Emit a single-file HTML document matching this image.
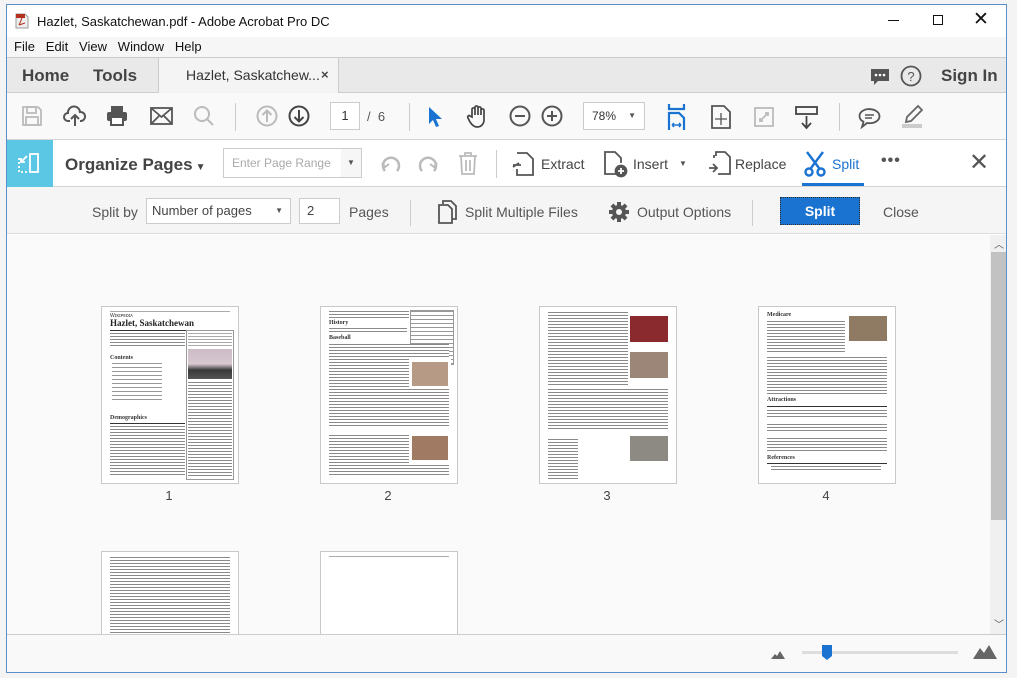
<!DOCTYPE html>
<html><head><meta charset="utf-8"><style>
*{margin:0;padding:0;box-sizing:border-box}
body{width:1017px;height:678px;background:#f4f4f4;font-family:"Liberation Sans",sans-serif;position:relative;overflow:hidden;color:#333}
.abs{position:absolute}
#win{position:absolute;left:6px;top:4px;width:1001px;height:669px;border:1px solid #5a8fc8;background:#fff;overflow:hidden}
.t{position:absolute;white-space:nowrap}
.tx{position:absolute;background:repeating-linear-gradient(#8a8a8a 0 1px,#fff 1px 3px)}
.tl{position:absolute;background:repeating-linear-gradient(#aaa 0 1px,#fff 1px 3px)}
.pg{position:absolute;background:#fff;border:1px solid #c8c8c8;overflow:hidden}
.num{position:absolute;font-size:13px;color:#444;width:40px;text-align:center}
svg{position:absolute}
</style></head><body>
<div id="win">
<svg style="left:7px;top:8px" width="16" height="16" viewBox="0 0 16 16"><path d="M2 1h9l3 3v11H2z" fill="#eee" stroke="#999"/><rect x="2" y="1" width="9" height="4" fill="#b3301c"/><path d="M5 12c2-4 3-6 3-8M5 12l6-2" stroke="#b3301c" fill="none"/></svg>
<div class="t" style="left:30px;top:9px;font-size:13px;color:#111">Hazlet, Saskatchewan.pdf - Adobe Acrobat Pro DC</div>
<div class="abs" style="left:881px;top:15px;width:11px;height:1px;background:#111"></div>
<div class="abs" style="left:926px;top:10px;width:10px;height:10px;border:1px solid #111"></div>
<div class="t" style="left:966px;top:3px;font-size:19px;color:#111">✕</div>
<div class="abs" style="left:0;top:32px;width:1001px;height:20px;background:#f6f6f6"></div>
<div class="t" style="left:7px;top:34px;font-size:13px;color:#111">File&nbsp;&nbsp;&nbsp;Edit&nbsp;&nbsp;&nbsp;View&nbsp;&nbsp;&nbsp;Window&nbsp;&nbsp;&nbsp;Help</div>
<div class="abs" style="left:0;top:52px;width:1001px;height:36px;background:#e9e9e9;border-top:1px solid #ccc;border-bottom:1px solid #ccc"></div>
<div class="abs" style="left:151px;top:52px;width:181px;height:37px;background:#f4f4f4;border-left:1px solid #ccc;border-right:1px solid #ccc;border-top:1px solid #ccc"></div>
<div class="t" style="left:15px;top:61px;font-size:17px;font-weight:bold;color:#444">Home</div>
<div class="t" style="left:86px;top:61px;font-size:17px;font-weight:bold;color:#444">Tools</div>
<div class="t" style="left:179px;top:62px;font-size:14px;color:#333">Hazlet, Saskatchew...</div>
<div class="t" style="left:314px;top:62px;font-size:13px;color:#444;font-weight:bold">×</div>
<svg style="left:863px;top:62px" width="20" height="20" viewBox="0 0 20 20"><path d="M1 2h18v12H8l-4 4v-4H1z" fill="#555"/><circle cx="6" cy="8" r="1.3" fill="#fff"/><circle cx="10" cy="8" r="1.3" fill="#fff"/><circle cx="14" cy="8" r="1.3" fill="#fff"/></svg>
<svg style="left:893px;top:60px" width="22" height="22" viewBox="0 0 22 22"><circle cx="11" cy="11" r="9.5" fill="none" stroke="#555" stroke-width="1.8"/><text x="11" y="16" font-size="13" text-anchor="middle" fill="#555" font-family="Liberation Sans">?</text></svg>
<div class="t" style="left:934px;top:61px;font-size:17px;font-weight:bold;color:#444">Sign In</div>
<div class="abs" style="left:0;top:88px;width:1001px;height:47px;background:#f9f9f9;border-bottom:1px solid #d4d4d4"></div>
<svg style="left:14px;top:100px" width="22" height="22" viewBox="0 0 22 22" fill="none" stroke="#bbb" stroke-width="1.8"><path d="M2 2h15l3 3v15H2z"/><rect x="6" y="2" width="9" height="6"/><rect x="5" y="12" width="12" height="8"/></svg>
<svg style="left:56px;top:100px" width="24" height="22" viewBox="0 0 24 22" fill="none" stroke="#555" stroke-width="2"><path d="M7 16H5a4 4 0 0 1 0-8 6 6 0 0 1 12-1 4.5 4.5 0 0 1 1 9h-1"/><path d="M12 21V10M8 14l4-4 4 4"/></svg>
<svg style="left:99px;top:100px" width="22" height="22" viewBox="0 0 22 22"><rect x="5" y="1" width="12" height="6" fill="#555"/><rect x="1" y="7" width="20" height="9" rx="2" fill="#555"/><rect x="5" y="12" width="12" height="8" fill="#fff" stroke="#555" stroke-width="2"/></svg>
<svg style="left:143px;top:102px" width="23" height="18" viewBox="0 0 23 18" fill="none" stroke="#555" stroke-width="1.8"><rect x="1" y="1" width="21" height="16"/><path d="M1 1l10.5 9L22 1M1 17l8-8M22 17l-8-8"/></svg>
<svg style="left:186px;top:100px" width="22" height="22" viewBox="0 0 22 22" fill="none" stroke="#bbb" stroke-width="2"><circle cx="9" cy="9" r="7"/><path d="M14 14l6 6"/></svg>
<div class="abs" style="left:228px;top:98px;width:1px;height:28px;background:#ccc"></div>
<svg style="left:249px;top:100px" width="22" height="22" viewBox="0 0 22 22" fill="none" stroke="#bbb" stroke-width="2"><circle cx="11" cy="11" r="9.5"/><path d="M11 17V6M6.5 10l4.5-4.5 4.5 4.5"/></svg>
<svg style="left:281px;top:100px" width="22" height="22" viewBox="0 0 22 22" fill="none" stroke="#444" stroke-width="2"><circle cx="11" cy="11" r="9.5"/><path d="M11 5v11M6.5 12l4.5 4.5 4.5-4.5"/></svg>
<div class="abs" style="left:323px;top:97px;width:30px;height:28px;border:1px solid #ccc;background:#fff;font-size:13px;text-align:center;line-height:26px">1</div>
<div class="t" style="left:360px;top:104px;font-size:13px;color:#555">/ &nbsp;6</div>
<div class="abs" style="left:402px;top:98px;width:1px;height:28px;background:#ccc"></div>
<svg style="left:420px;top:101px" width="16" height="22" viewBox="0 0 16 22"><path d="M2 1v17l4-4 3 7 3-1-3-7h6z" fill="#1a73d0"/></svg>
<svg style="left:459px;top:99px" width="24" height="25" viewBox="0 0 24 25" fill="none" stroke="#444" stroke-width="1.7"><path d="M6 13V5a1.6 1.6 0 0 1 3 0v6V3a1.6 1.6 0 0 1 3 0v8V4a1.6 1.6 0 0 1 3 0v7V6a1.6 1.6 0 0 1 3 0v10c0 4-3 7-7 7-3 0-5-2-7-5l-2-4c-1-2 1-3 2-2z"/></svg>
<svg style="left:502px;top:100px" width="22" height="22" viewBox="0 0 22 22" fill="none" stroke="#555" stroke-width="2"><circle cx="11" cy="11" r="9.5"/><path d="M6 11h10"/></svg>
<svg style="left:534px;top:100px" width="22" height="22" viewBox="0 0 22 22" fill="none" stroke="#555" stroke-width="2"><circle cx="11" cy="11" r="9.5"/><path d="M6 11h10M11 6v10"/></svg>
<div class="abs" style="left:576px;top:97px;width:62px;height:28px;border:1px solid #ccc;background:#fff;font-size:12px;line-height:26px;padding-left:8px;color:#333">78%<span style="position:absolute;right:8px;top:0;font-size:8px;color:#555">▼</span></div>
<svg style="left:660px;top:98px" width="20" height="28" viewBox="0 0 20 28" fill="none" stroke="#1a73d0" stroke-width="2.2"><path d="M2 1v5h15V1M2 27V10h10l5 5v12"/><path d="M5 22h9M5 22l2-2M5 22l2 2M14 22l-2-2M14 22l-2 2" stroke-width="1.5"/></svg>
<svg style="left:704px;top:100px" width="20" height="24" viewBox="0 0 20 24" fill="none" stroke="#555" stroke-width="1.8"><path d="M1 1h12l6 6v16H1z"/><path d="M10 8v12M4 14h12" stroke-width="1.3"/></svg>
<svg style="left:747px;top:102px" width="20" height="20" viewBox="0 0 20 20" fill="none" stroke="#bbb" stroke-width="1.8"><rect x="1" y="1" width="18" height="18"/><path d="M6 14l8-8M11 6h3v3M6 11v3h3"/></svg>
<svg style="left:788px;top:101px" width="24" height="24" viewBox="0 0 24 24" fill="none" stroke="#444" stroke-width="1.8"><rect x="1" y="1" width="21" height="7"/><path d="M11.5 10v12M7 17l4.5 5 4.5-5"/></svg>
<div class="abs" style="left:832px;top:98px;width:1px;height:28px;background:#ccc"></div>
<svg style="left:851px;top:102px" width="23" height="22" viewBox="0 0 23 22" fill="none" stroke="#555" stroke-width="1.8"><path d="M11.5 2C6 2 1.5 5 1.5 9c0 2.5 1.5 4.5 4 5.7L4 20l5-4c1 .2 1.5.2 2.5.2 5.5 0 10-3 10-7s-4.5-7-10-7z"/><path d="M7 8h9M7 11h7" stroke-width="1.4"/></svg>
<svg style="left:893px;top:99px" width="24" height="26" viewBox="0 0 24 26"><path d="M18 2l4 4-11 11-5 1 1-5z" fill="none" stroke="#666" stroke-width="1.8"/><rect x="2" y="20" width="20" height="4" fill="#ccc"/></svg>
<div class="abs" style="left:0;top:135px;width:1001px;height:47px;background:#fff;border-bottom:1px solid #d4d4d4"></div>
<div class="abs" style="left:0;top:135px;width:46px;height:47px;background:#5bc7e5"></div>
<svg style="left:11px;top:148px" width="22" height="20" viewBox="0 0 22 20" fill="none" stroke="#fff" stroke-width="1.8"><rect x="12" y="1" width="8" height="18"/><path d="M1 5v14h8" stroke-dasharray="2 2"/><path d="M9 3L3 9M3 5v4h4"/></svg>
<div class="t" style="left:58px;top:150px;font-size:17px;font-weight:bold;color:#444">Organize Pages<span style="font-size:10px;margin-left:3px">▼</span></div>
<div class="abs" style="left:216px;top:143px;width:139px;height:30px;border:1px solid #ccc;background:#fff;font-size:12px;line-height:28px;padding-left:8px;color:#aaa">Enter Page Range<span style="position:absolute;right:0;top:0;width:20px;height:28px;background:#f6f6f6;text-align:center;font-size:8px;color:#555">▼</span></div>
<svg style="left:373px;top:148px" width="22" height="22" viewBox="0 0 22 22" fill="none" stroke="#bbb" stroke-width="2.5"><path d="M5 18A8 8 0 1 1 17 18"/><path d="M2 10l3 4 4-3" stroke-width="2"/></svg>
<svg style="left:410px;top:148px" width="22" height="22" viewBox="0 0 22 22" fill="none" stroke="#bbb" stroke-width="2.5"><path d="M5 18A8 8 0 1 1 17 18"/><path d="M20 10l-3 4-4-3" stroke-width="2"/></svg>
<svg style="left:451px;top:147px" width="20" height="23" viewBox="0 0 20 23" fill="none" stroke="#bbb" stroke-width="1.8"><path d="M1 4h18M7 4V1h6v3M3 4l1 18h12l1-18M8 8v11M12 8v11"/></svg>
<div class="abs" style="left:489px;top:145px;width:1px;height:28px;background:#ccc"></div>
<svg style="left:505px;top:147px" width="22" height="24" viewBox="0 0 22 24" fill="none" stroke="#555" stroke-width="1.8"><path d="M5 1h10l6 6v16H5v-6"/><path d="M1 15l6-4M9 13H1" /></svg>
<div class="t" style="left:534px;top:151px;font-size:14px;color:#444">Extract</div>
<svg style="left:597px;top:146px" width="24" height="27" viewBox="0 0 24 27" fill="none" stroke="#555" stroke-width="1.8"><path d="M12 23H1V1h10l6 6v5"/><circle cx="17" cy="20" r="5.5" fill="#555"/><path d="M17 17v6M14 20h6" stroke="#fff"/></svg>
<div class="t" style="left:626px;top:151px;font-size:14px;color:#444">Insert</div>
<div class="t" style="left:672px;top:154px;font-size:8px;color:#555">▼</div>
<svg style="left:700px;top:145px" width="24" height="27" viewBox="0 0 24 27" fill="none" stroke="#555" stroke-width="1.8"><path d="M9 6V2h9l5 5v17H11"/><path d="M2 18h7M6 14l4 4-4 4M7 8V5"/></svg>
<div class="t" style="left:728px;top:151px;font-size:14px;color:#444">Replace</div>
<svg style="left:797px;top:146px" width="22" height="26" viewBox="0 0 22 26" fill="none" stroke="#1a73d0" stroke-width="2.4"><path d="M3 1l12 16M19 1L7 17"/><circle cx="5" cy="21" r="3.5"/><circle cx="17" cy="21" r="3.5"/></svg>
<div class="t" style="left:825px;top:151px;font-size:14px;color:#1a73d0">Split</div>
<div class="abs" style="left:795px;top:178px;width:62px;height:3px;background:#1a73d0"></div>
<div class="t" style="left:874px;top:147px;font-size:16px;color:#555;letter-spacing:1px;font-weight:bold">•••</div>
<div class="t" style="left:962px;top:143px;font-size:24px;color:#555">✕</div>
<div class="abs" style="left:0;top:182px;width:1001px;height:47px;background:#f5f5f5;border-bottom:1px solid #ddd"></div>
<div class="t" style="left:85px;top:199px;font-size:14px;color:#555">Split by</div>
<div class="abs" style="left:139px;top:193px;width:145px;height:26px;border:1px solid #ccc;background:#fff;font-size:13px;line-height:24px;padding-left:5px;color:#444">Number of pages<span style="position:absolute;right:7px;top:0;font-size:8px;color:#555">▼</span></div>
<div class="abs" style="left:292px;top:193px;width:41px;height:26px;border:1px solid #ccc;background:#fff;font-size:13px;line-height:24px;padding-left:7px;color:#444">2</div>
<div class="t" style="left:342px;top:199px;font-size:14px;color:#555">Pages</div>
<div class="abs" style="left:403px;top:195px;width:1px;height:26px;background:#ccc"></div>
<svg style="left:431px;top:195px" width="20" height="24" viewBox="0 0 20 24" fill="none" stroke="#555" stroke-width="1.8"><path d="M5 4V1h8l5 5v13h-4"/><path d="M1 5h9l4 4v14H1z"/></svg>
<div class="t" style="left:458px;top:199px;font-size:14px;color:#555">Split Multiple Files</div>
<svg style="left:601px;top:196px" width="22" height="22" viewBox="0 0 22 22"><g fill="#555"><circle cx="11" cy="11" r="7"/><rect x="9" y="1" width="4" height="20"/><rect x="1" y="9" width="20" height="4"/><rect x="9" y="1" width="4" height="20" transform="rotate(45 11 11)"/><rect x="9" y="1" width="4" height="20" transform="rotate(-45 11 11)"/></g><circle cx="11" cy="11" r="3" fill="#f5f5f5"/></svg>
<div class="t" style="left:630px;top:199px;font-size:14px;color:#555">Output Options</div>
<div class="abs" style="left:745px;top:195px;width:1px;height:26px;background:#ccc"></div>
<div class="abs" style="left:773px;top:192px;width:80px;height:28px;background:#1a73d0;border:1px dotted #333;color:#fff;font-size:14px;font-weight:bold;text-align:center;line-height:26px">Split</div>
<div class="t" style="left:876px;top:199px;font-size:14px;color:#555">Close</div>
<div class="abs" style="left:0;top:230px;width:983px;height:399px;background:#fafafa"></div>
<div class="abs" style="left:983px;top:230px;width:17px;height:399px;background:#f0f0f0"></div>
<div class="abs" style="left:984px;top:247px;width:15px;height:268px;background:#c2c2c2"></div>
<div class="t" style="left:987px;top:231px;font-size:10px;color:#555">︿</div>
<div class="t" style="left:987px;top:611px;font-size:10px;color:#555">﹀</div>
<div class="pg" style="left:94px;top:301px;width:138px;height:178px">
 <div class="tl" style="left:8px;top:4px;width:120px;height:1px"></div>
 <div class="t" style="left:8px;top:6px;font-size:5px;color:#333">Wɪᴋɪᴘᴇᴅɪᴀ</div>
 <div class="t" style="left:8px;top:11px;font-size:9px;font-family:'Liberation Serif';font-weight:bold;color:#222">Hazlet, Saskatchewan</div>
 <div class="abs" style="left:8px;top:23px;width:122px;height:1px;background:#333"></div>
 <div class="tx" style="left:8px;top:26px;width:75px;height:14px"></div>
 <div class="t" style="left:8px;top:48px;font-size:6px;font-family:'Liberation Serif';font-weight:bold">Contents</div>
 <div class="tx" style="left:10px;top:56px;width:50px;height:40px;background:repeating-linear-gradient(#999 0 1px,#fff 1px 4px)"></div>
 <div class="t" style="left:8px;top:108px;font-size:6px;font-family:'Liberation Serif';font-weight:bold">Demographics</div>
 <div class="abs" style="left:8px;top:116px;width:75px;height:1px;background:#333"></div>
 <div class="tx" style="left:8px;top:119px;width:75px;height:50px"></div>
 <div class="abs" style="left:84px;top:23px;width:48px;height:150px;border:1px solid #999"></div>
 <div class="tl" style="left:86px;top:26px;width:44px;height:13px"></div>
 <div class="abs" style="left:86px;top:42px;width:44px;height:30px;background:linear-gradient(#cbbcc6 0,#d8c8cf 50%,#3a3a3a 70%,#555 100%)"></div>
 <div class="tx" style="left:86px;top:75px;width:44px;height:96px"></div>
</div>
<div class="num" style="left:142px;top:483px">1</div>
<div class="pg" style="left:313px;top:301px;width:138px;height:178px">
 <div class="tx" style="left:8px;top:4px;width:80px;height:8px"></div>
 <div class="abs" style="left:89px;top:3px;width:44px;height:55px;border:1px solid #999;background:repeating-linear-gradient(#999 0 1px,#fff 1px 4px)"></div>
 <div class="t" style="left:8px;top:13px;font-size:6px;font-family:'Liberation Serif';font-weight:bold">History</div>
 <div class="tx" style="left:8px;top:21px;width:78px;height:6px"></div>
 <div class="t" style="left:8px;top:28px;font-size:6px;font-family:'Liberation Serif';font-weight:bold">Baseball</div>
 <div class="tx" style="left:8px;top:37px;width:120px;height:84px"></div>
 <div class="abs" style="left:88px;top:52px;width:42px;height:30px;background:#b79a86;border:3px solid #fff"></div>
 <div class="tx" style="left:8px;top:128px;width:120px;height:40px"></div>
 <div class="abs" style="left:88px;top:126px;width:42px;height:30px;background:#a07a63;border:3px solid #fff"></div>
</div>
<div class="num" style="left:361px;top:483px">2</div>
<div class="pg" style="left:532px;top:301px;width:138px;height:178px">
 <div class="tx" style="left:8px;top:5px;width:80px;height:75px"></div>
 <div class="abs" style="left:90px;top:9px;width:38px;height:26px;background:#8a2a2e"></div>
 <div class="abs" style="left:90px;top:45px;width:38px;height:26px;background:#9b8677"></div>
 <div class="tx" style="left:8px;top:82px;width:120px;height:42px"></div>
 <div class="tx" style="left:8px;top:132px;width:30px;height:40px"></div>
 <div class="abs" style="left:90px;top:129px;width:38px;height:25px;background:#8c8a82"></div>
</div>
<div class="num" style="left:580px;top:483px">3</div>
<div class="pg" style="left:751px;top:301px;width:138px;height:178px">
 <div class="t" style="left:8px;top:5px;font-size:6px;font-family:'Liberation Serif';font-weight:bold">Medicare</div>
 <div class="tx" style="left:8px;top:14px;width:78px;height:32px"></div>
 <div class="abs" style="left:90px;top:9px;width:38px;height:25px;background:#8f7a63"></div>
 <div class="tx" style="left:8px;top:50px;width:120px;height:38px"></div>
 <div class="t" style="left:8px;top:90px;font-size:6px;font-family:'Liberation Serif';font-weight:bold">Attractions</div>
 <div class="abs" style="left:8px;top:99px;width:120px;height:1px;background:#333"></div>
 <div class="tx" style="left:8px;top:103px;width:120px;height:8px"></div>
 <div class="tx" style="left:8px;top:117px;width:120px;height:8px"></div>
 <div class="tx" style="left:8px;top:131px;width:120px;height:14px"></div>
 <div class="t" style="left:8px;top:148px;font-size:6px;font-family:'Liberation Serif';font-weight:bold">References</div>
 <div class="abs" style="left:8px;top:156px;width:120px;height:1px;background:#333"></div>
 <div class="tx" style="left:12px;top:159px;width:110px;height:5px"></div>
</div>
<div class="num" style="left:799px;top:483px">4</div>
<div class="pg" style="left:94px;top:546px;width:138px;height:90px">
 <div class="tx" style="left:8px;top:5px;width:120px;height:80px"></div>
</div>
<div class="pg" style="left:313px;top:546px;width:138px;height:90px">
 <div class="tl" style="left:8px;top:4px;width:120px;height:1px"></div>
</div>
<div class="abs" style="left:0;top:629px;width:1001px;height:40px;background:#f9f9f9;border-top:1px solid #ccc"></div>
<svg style="left:764px;top:645px" width="14" height="9" viewBox="0 0 14 9"><path d="M0 9l4-5 2 2 3-5 5 8z" fill="#666"/></svg>
<div class="abs" style="left:795px;top:646px;width:156px;height:3px;background:#ddd"></div>
<svg style="left:815px;top:640px" width="10" height="15" viewBox="0 0 10 15"><path d="M0 0h10v11l-5 4-5-4z" fill="#1a73d0"/></svg>
<svg style="left:966px;top:640px" width="24" height="14" viewBox="0 0 24 14"><path d="M0 14l7-11 4 5 5-8 8 14z" fill="#666"/></svg>
</div>
</body></html>
